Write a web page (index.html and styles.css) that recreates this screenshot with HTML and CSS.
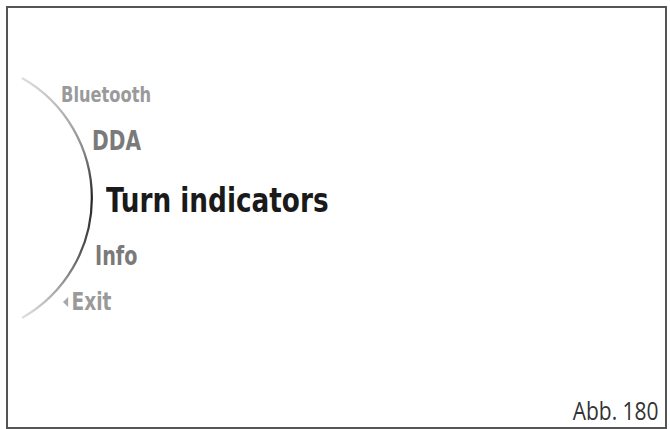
FILE: index.html
```html
<!DOCTYPE html>
<html lang="en">
<head>
  <meta charset="UTF-8">
  <meta name="viewport" content="width=device-width, initial-scale=1.0">
  <title>Turn indicators</title>
  <link rel="stylesheet" href="styles.css">
</head>
<body>
  <div class="pantalla">
    <svg class="arco" width="120" height="330" viewBox="0 0 120 330">
      <defs>
        <linearGradient id="fade" gradientUnits="userSpaceOnUse" x1="0" y1="70" x2="0" y2="310">
          <stop offset="0" stop-color="#ddd"/>
          <stop offset="0.3" stop-color="#888"/>
          <stop offset="0.5" stop-color="#222"/>
          <stop offset="0.72" stop-color="#555"/>
          <stop offset="1" stop-color="#e0e0e0"/>
        </linearGradient>
      </defs>
      <path d="M14 70 A138 138 0 0 1 14 310" fill="none" stroke="url(#fade)" stroke-width="2.2"/>
    </svg>

    <ul class="menu">
      <li class="item pequeno bluetooth">Bluetooth</li>
      <li class="item medio dda">DDA</li>
      <li class="item activo">Turn indicators</li>
      <li class="item medio info">Info</li>
      <li class="item pequeno salir"><span class="flecha"></span>Exit</li>
    </ul>

    <div class="pie">Abb. 180</div>
  </div>
</body>
</html>
```

FILE: styles.css
```css
body {
  margin: 0;
  background: #fff;
}
.pantalla {
  position: relative;
  box-sizing: border-box;
  width: 661px;
  height: 423px;
  margin: 6px 0 0 6px;
  border: 2px solid #555;
  display: flex;
  flex-direction: column;
}
.arco {
  position: absolute;
  left: 0;
  top: 0;
}
.menu {
  list-style: none;
  margin: 0;
  padding: 77px 0 0 0;
  font-family: "Liberation Sans Narrow", "DejaVu Sans Condensed", Roboto, sans-serif;
  font-weight: bold;
}
/* the menu font is a condensed face, squeeze it a bit more */
.item {
  line-height: 1;
  transform: scaleX(0.86);
  transform-origin: left center;
}
.pequeno {
  font-size: 21px;
  color: #9a9a9a;
}
.medio {
  font-size: 26px;
  color: #7a7a7a;
}
.activo {
  font-size: 34px;
  color: #1a1a1a;
  margin: 29px 0 0 98px;
}
.bluetooth {
  margin-left: 53px;
}
.dda {
  margin: 22px 0 0 84px;
}
.info {
  margin: 26px 0 0 87px;
  transform: scaleX(0.82);
}
.salir {
  font-size: 24px;
  margin: 21px 0 0 55px;
}
.flecha {
  display: inline-block;
  width: 0;
  height: 0;
  border-top: 5px solid transparent;
  border-bottom: 5px solid transparent;
  border-right: 6px solid #a8a8a8;
  margin-right: 4px;
  vertical-align: 3px;
}
.pie {
  margin-top: auto;
  align-self: flex-end;
  padding: 0 8px 3px 0;
  font-family: "Open Sans", sans-serif;
  font-size: 25px;
  line-height: 1.1;
  color: #333;
  transform: scaleX(0.84);
  transform-origin: right center;
}
```
